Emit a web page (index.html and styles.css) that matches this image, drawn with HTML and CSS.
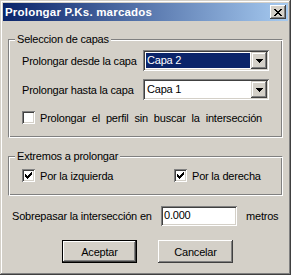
FILE: index.html
```html
<!DOCTYPE html>
<html lang="es">
<head>
    <meta charset="UTF-8">
    <title>Prolongar P.Ks. marcados</title>
    <link rel="stylesheet" href="styles.css">
</head>
<body>
    <div class="window">
        <div class="titlebar">
            <span class="title">Prolongar P.Ks. marcados</span>
            <span class="close-btn">
                <svg width="8" height="7" viewBox="0 0 8 7" shape-rendering="crispEdges"><path d="M0 0h2v1h-2zM6 0h2v1h-2zM1 1h2v1h-2zM5 1h2v1h-2zM2 2h4v1h-4zM3 3h2v1h-2zM2 4h4v1h-4zM1 5h2v1h-2zM5 5h2v1h-2zM0 6h2v1h-2zM6 6h2v1h-2z" fill="#000"/></svg>
            </span>
        </div>

        <div class="client">
            <div class="group group-layers">
                <span class="group-caption">Seleccion de capas</span>
                <div class="field-row">
                    <span class="field-label">Prolongar desde la capa</span>
                    <div class="combo">
                        <span class="combo-value selected">Capa 2</span>
                        <span class="combo-btn"><svg width="7" height="4" viewBox="0 0 7 4" shape-rendering="crispEdges"><path d="M0 0h7v1h-7zM1 1h5v1h-5zM2 2h3v1h-3zM3 3h1v1h-1z" fill="#000"/></svg></span>
                    </div>
                </div>
                <div class="field-row">
                    <span class="field-label">Prolongar hasta la capa</span>
                    <div class="combo">
                        <span class="combo-value">Capa 1</span>
                        <span class="combo-btn"><svg width="7" height="4" viewBox="0 0 7 4" shape-rendering="crispEdges"><path d="M0 0h7v1h-7zM1 1h5v1h-5zM2 2h3v1h-3zM3 3h1v1h-1z" fill="#000"/></svg></span>
                    </div>
                </div>
                <label class="check-row">
                    <span class="checkbox"></span>
                    <span class="check-text justified">Prolongar el perfil sin buscar la intersección</span>
                </label>
            </div>

            <div class="group group-ends">
                <span class="group-caption">Extremos a prolongar</span>
                <div class="check-pair">
                    <label class="check-row check-left">
                        <span class="checkbox"><svg width="7" height="7" viewBox="0 0 7 7" shape-rendering="crispEdges"><path d="M6 0h1v1h-1zM5 1h2v1h-2zM0 2h1v1h-1zM4 2h3v1h-3zM0 3h2v1h-2zM3 3h3v1h-3zM0 4h5v1h-5zM1 5h3v1h-3zM2 6h1v1h-1z" fill="#000"/></svg></span>
                        <span class="check-text">Por la izquierda</span>
                    </label>
                    <label class="check-row">
                        <span class="checkbox"><svg width="7" height="7" viewBox="0 0 7 7" shape-rendering="crispEdges"><path d="M6 0h1v1h-1zM5 1h2v1h-2zM0 2h1v1h-1zM4 2h3v1h-3zM0 3h2v1h-2zM3 3h3v1h-3zM0 4h5v1h-5zM1 5h3v1h-3zM2 6h1v1h-1z" fill="#000"/></svg></span>
                        <span class="check-text">Por la derecha</span>
                    </label>
                </div>
            </div>

            <div class="overshoot-row">
                <span class="overshoot-label">Sobrepasar la intersección en</span>
                <span class="edit">0.000</span>
                <span class="units">metros</span>
            </div>

            <div class="button-row">
                <button class="btn btn-default">Aceptar</button>
                <button class="btn">Cancelar</button>
            </div>
        </div>
    </div>
</body>
</html>
```

FILE: styles.css
```css
* {
    margin: 0;
    padding: 0;
    box-sizing: border-box;
}

body {
    font-family: 'Liberation Sans', Arial, sans-serif;
    font-size: 11px;
    letter-spacing: -0.2px;
    color: #000;
    background: #d4d0c8;
}

.window {
    width: 291px;
    height: 275px;
    padding: 3px;
    background: #d4d0c8;
    box-shadow: inset -1px -1px #404040, inset 1px 1px #d4d0c8,
                inset -2px -2px #808080, inset 2px 2px #fff;
}

/* title bar */
.titlebar {
    height: 18px;
    display: flex;
    align-items: center;
    justify-content: space-between;
    padding: 0 2px 0 2px;
    background: linear-gradient(to right, #0a246a, #a6caf0);
}

.title {
    color: #fff;
    font-weight: bold;
    font-size: 11.5px;
    letter-spacing: 0.2px;
}

.close-btn {
    width: 16px;
    height: 14px;
    display: flex;
    align-items: center;
    justify-content: center;
    background: #d4d0c8;
    box-shadow: inset -1px -1px #404040, inset 1px 1px #fff,
                inset -2px -2px #808080, inset 2px 2px #d4d0c8;
}

.client {
    padding: 0 5px;
    display: flex;
    flex-direction: column;
}

/* etched group boxes */
.group {
    position: relative;
    border: 1px solid;
    border-color: #808080 #fff #fff #808080;
    box-shadow: inset 1px 1px #fff, inset -1px -1px #808080;
}

.group-caption {
    position: absolute;
    top: -7px;
    left: 6px;
    padding: 0 2px;
    line-height: 13px;
    background: #d4d0c8;
}

.group-layers {
    margin-top: 18px;
    padding: 10px 0 13px 13px;
    display: flex;
    flex-direction: column;
    gap: 8px;
}

.group-ends {
    margin-top: 18px;
    padding: 12px 0 13px 13px;
}

.field-row {
    display: flex;
    align-items: center;
    height: 21px;
}

.field-label {
    width: 121px;
}

/* combo boxes */
.combo {
    width: 126px;
    height: 21px;
    display: flex;
    padding: 2px;
    background: #fff;
    box-shadow: inset 1px 1px #808080, inset -1px -1px #fff,
                inset 2px 2px #404040, inset -2px -2px #d4d0c8;
}

.combo-value {
    flex: 1;
    margin: 1px;
    padding-left: 1px;
    line-height: 15px;
}

.combo-value.selected {
    background: #0a246a;
    color: #fff;
}

.combo-btn {
    width: 16px;
    height: 17px;
    display: flex;
    align-items: center;
    justify-content: center;
    background: #d4d0c8;
    box-shadow: inset -1px -1px #404040, inset 1px 1px #d4d0c8,
                inset -2px -2px #808080, inset 2px 2px #fff;
}

/* check boxes */
.check-row {
    display: flex;
    align-items: center;
    height: 13px;
}

.group-layers .check-row {
    margin-top: 3px;
}

.checkbox {
    width: 13px;
    height: 13px;
    display: flex;
    align-items: center;
    justify-content: center;
    background: #fff;
    box-shadow: inset 1px 1px #808080, inset -1px -1px #fff,
                inset 2px 2px #404040, inset -2px -2px #d4d0c8;
}

.check-text {
    margin-left: 5px;
}

.justified {
    display: inline-block;
    width: 222px;
    text-align: justify;
    text-align-last: justify;
}

.check-pair {
    display: flex;
}

.check-left {
    width: 152px;
}

/* overshoot value */
.overshoot-row {
    margin-top: 10px;
    padding-left: 4px;
    display: flex;
    align-items: center;
    height: 20px;
}

.overshoot-label {
    width: 149px;
}

.edit {
    width: 76px;
    height: 20px;
    padding: 3px 3px 0;
    background: #fff;
    box-shadow: inset 1px 1px #808080, inset -1px -1px #fff,
                inset 2px 2px #404040, inset -2px -2px #d4d0c8;
}

.units {
    margin-left: 9px;
}

/* buttons */
.button-row {
    margin-top: 14px;
    padding-left: 54px;
    display: flex;
    gap: 21px;
}

.btn {
    width: 75px;
    height: 23px;
    border: none;
    font-family: inherit;
    font-size: 11px;
    letter-spacing: -0.2px;
    color: #000;
    background: #d4d0c8;
    box-shadow: inset -1px -1px #404040, inset 1px 1px #fff,
                inset -2px -2px #808080, inset 2px 2px #d4d0c8;
}

.btn-default {
    border: 1px solid #000;
}
```
